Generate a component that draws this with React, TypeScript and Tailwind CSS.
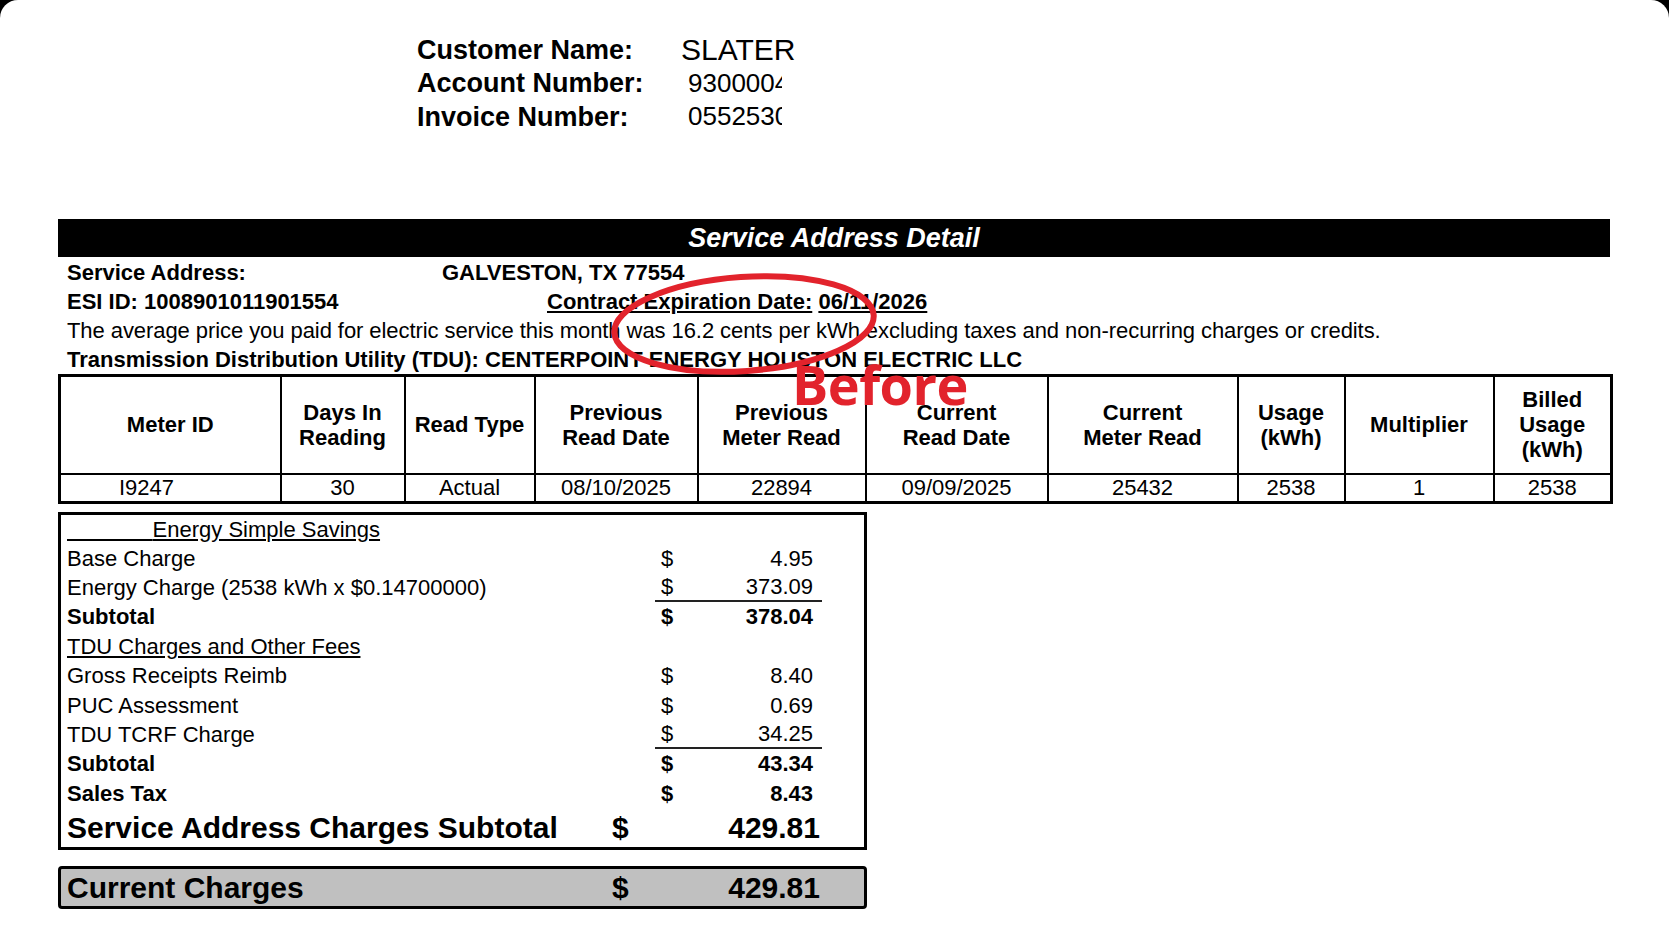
import React from "react";

type RowProps = {
  label: React.ReactNode;
  amt?: string;
  bold?: boolean;
  line?: boolean;
  h: string;
};

function Row({ label, amt, bold, line, h }: RowProps) {
  return (
    <div className={`flex items-stretch pl-[6px] ${h} ${bold ? "font-bold" : ""}`}>
      <div className="w-[588px] flex items-center whitespace-pre">{label}</div>
      {amt !== undefined && (
        <div
          className={`w-[167px] flex items-center pl-[6px] pr-[9px] ${
            line ? "border-b-2 border-[#222]" : ""
          }`}
        >
          <span className="w-[12px]">$</span>
          <span className="w-[140px] text-right">{amt}</span>
        </div>
      )}
    </div>
  );
}

function BigRow({ label, amt }: { label: string; amt: string }) {
  return (
    <div className="flex items-center pl-[6px] h-full text-[30px] font-bold">
      <div className="w-[545px] whitespace-nowrap">{label}</div>
      <span className="w-[17px]">$</span>
      <span className="w-[191px] text-right">{amt}</span>
    </div>
  );
}

const headers: React.ReactNode[] = [
  <>Meter ID</>,
  <>
    Days In
    <br />
    Reading
  </>,
  <>Read Type</>,
  <>
    Previous
    <br />
    Read Date
  </>,
  <>
    Previous
    <br />
    Meter Read
  </>,
  <>
    Current
    <br />
    Read Date
  </>,
  <>
    Current
    <br />
    Meter Read
  </>,
  <>
    Usage
    <br />
    (kWh)
  </>,
  <>Multiplier</>,
  <>
    Billed
    <br />
    Usage
    <br />
    (kWh)
  </>,
];

const data = ["30", "Actual", "08/10/2025", "22894", "09/09/2025", "25432", "2538", "1", "2538"];

export default function App() {
  return (
    <div className="w-[1669px] h-[949px] bg-black overflow-hidden">
      <div className="relative w-full h-full bg-white rounded-t-[18px] font-['Liberation_Sans',Arial,sans-serif] text-black">
        {/* Customer header */}
        <div className="pt-[33px] pl-[417px]">
          <div className="flex h-[33.5px] items-center">
            <div className="w-[264px] text-[27px] font-bold">Customer Name:</div>
            <div className="text-[30px]">SLATER</div>
          </div>
          <div className="flex h-[33.5px] items-center">
            <div className="w-[264px] text-[27px] font-bold">Account Number:</div>
            <div className="pl-[7px] text-[26px]">
              <span className="block w-[94px] overflow-hidden whitespace-nowrap">9300004</span>
            </div>
          </div>
          <div className="flex h-[33.5px] items-center">
            <div className="w-[264px] text-[27px] font-bold">Invoice Number:</div>
            <div className="pl-[7px] text-[26px]">
              <span className="block w-[94px] overflow-hidden whitespace-nowrap">0552530</span>
            </div>
          </div>
        </div>

        <div className="ml-[58px] w-[1552px]">
          {/* Black bar */}
          <div className="mt-[85.5px] h-[38px] bg-black flex items-center justify-center text-white text-[27px] font-bold italic">
            Service Address Detail
          </div>

          {/* Info lines */}
          <div className="pl-[9px] pt-[1px] text-[22px] leading-[29px]">
            <div className="flex font-bold">
              <div className="w-[375px]">Service Address:</div>
              <div>GALVESTON, TX 77554</div>
            </div>
            <div className="flex font-bold">
              <div className="w-[480px]">ESI ID: 1008901011901554</div>
              <div>
                <span className="underline">Contract Expiration Date:</span>{" "}
                <span className="underline">06/11/2026</span>
              </div>
            </div>
            <div className="tracking-[-0.07px]">
              The average price you paid for electric service this month was 16.2 cents per kWh excluding taxes and
              non-recurring charges or credits.
            </div>
            <div className="font-bold">
              Transmission Distribution Utility (TDU): CENTERPOINT ENERGY HOUSTON ELECTRIC LLC
            </div>
          </div>

          {/* Meter table */}
          <table className="table-fixed w-[1552px] border-collapse border-[3px] border-black text-[22px]">
            <colgroup>
              <col className="w-[221px]" />
              <col className="w-[124px]" />
              <col className="w-[130px]" />
              <col className="w-[163px]" />
              <col className="w-[168px]" />
              <col className="w-[182px]" />
              <col className="w-[190px]" />
              <col className="w-[107px]" />
              <col className="w-[149px]" />
              <col className="w-[118px]" />
            </colgroup>
            <thead>
              <tr className="h-[98px]">
                {headers.map((h, i) => (
                  <th
                    key={i}
                    className="border-2 border-black font-bold text-center align-middle leading-[25px] p-0"
                  >
                    {h}
                  </th>
                ))}
              </tr>
            </thead>
            <tbody>
              <tr className="h-[29px]">
                <td className="border-2 border-black text-left pl-[58px] leading-[24px] p-0">I9247</td>
                {data.map((d, i) => (
                  <td key={i} className="border-2 border-black text-center leading-[24px] p-0">
                    {d}
                  </td>
                ))}
              </tr>
            </tbody>
          </table>

          {/* Charges box */}
          <div className="mt-[8px] w-[809px] border-[3px] border-black text-[22px]">
            <Row
              h="h-[28.5px]"
              label={
                <span className="underline">{"              "}Energy Simple Savings</span>
              }
            />
            <Row h="h-[29.4px]" label="Base Charge" amt="4.95" />
            <Row h="h-[29.4px]" label="Energy Charge (2538 kWh x $0.14700000)" amt="373.09" line />
            <Row h="h-[29.4px]" label="Subtotal" amt="378.04" bold />
            <Row h="h-[29.4px]" label={<span className="underline">TDU Charges and Other Fees</span>} />
            <Row h="h-[29.4px]" label="Gross Receipts Reimb" amt="8.40" />
            <Row h="h-[29.4px]" label="PUC Assessment" amt="0.69" />
            <Row h="h-[29.4px]" label="TDU TCRF Charge" amt="34.25" line />
            <Row h="h-[29.4px]" label="Subtotal" amt="43.34" bold />
            <Row h="h-[29.4px]" label="Sales Tax" amt="8.43" bold />
            <div className="h-[38.5px]">
              <BigRow label="Service Address Charges Subtotal" amt="429.81" />
            </div>
          </div>

          {/* Current charges */}
          <div className="mt-[16px] w-[809px] h-[43px] border-[3px] border-black rounded-[4px] bg-[#c0c0c0]">
            <BigRow label="Current Charges" amt="429.81" />
          </div>
        </div>

        {/* Annotation overlay */}
        <svg
          className="absolute left-[596px] top-[262px]"
          width="296"
          height="124"
          viewBox="0 0 296 124"
        >
          <ellipse
            cx="148"
            cy="62"
            rx="130"
            ry="47"
            fill="none"
            stroke="#e2232c"
            strokeWidth="6"
            transform="rotate(-4 148 62)"
          />
        </svg>
        <div className="absolute left-[792px] top-[357px] font-['Open_Sans',sans-serif] font-bold text-[54px] leading-none text-[#e2232c] tracking-[-0.5px]">
          Before
        </div>
      </div>
    </div>
  );
}
